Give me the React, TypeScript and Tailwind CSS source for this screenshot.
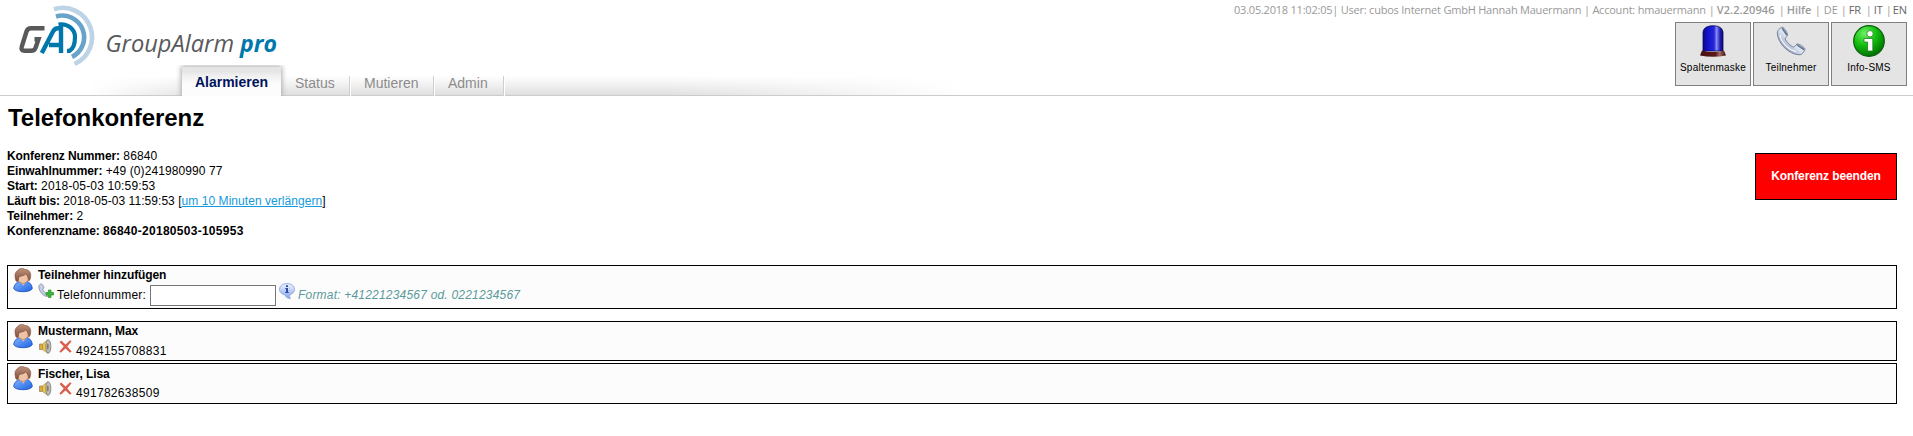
import React from "react";

function Logo() {
  return (
    <svg width="270" height="70" viewBox="12 0 270 70" className="block shrink-0" fill="none">
      <path d="M54 9.200A29.300 29.300 0 0 1 74.500 64" stroke="#bdd3e6" strokeWidth="4.600" />
      <path d="M56 16.500A21.800 21.800 0 0 1 72 56.900" stroke="#68a3c9" strokeWidth="4.600" />
      <path d="M58.500 24.500C68 23 75 29.500 75 37C75 44 73 49 69.500 50.800H67" stroke="#0078ab" strokeWidth="4.200" />
      <path d="M44.500 28.200H31C28.500 28.200 27.200 29.200 26.500 31.500L21.800 46.500C21 49.500 22 50.800 24.500 50.800H31C33.500 50.800 34.800 50 35.500 48L38.500 39.200H34.500" stroke="#58595b" strokeWidth="4.400" />
      <path d="M41.800 53L53 31.500C54.500 28.800 55.500 28.300 58 28.300H61V53M49 45H61" stroke="#0078ab" strokeWidth="4.400" />
      <text x="105.500" y="52" textLength="128.500" lengthAdjust="spacingAndGlyphs" fill="#58595b" className="font-['Open_Sans',sans-serif] text-[24px] italic">GroupAlarm</text>
      <text x="240" y="52" textLength="37" lengthAdjust="spacingAndGlyphs" fill="#0078ab" className="font-['Open_Sans',sans-serif] text-[24px] font-bold italic">pro</text>
    </svg>
  );
}

function BeaconIcon() {
  return (
    <svg width="28" height="32" viewBox="0 0 28 32" className="block">
      <defs>
        <linearGradient id="beacon" x1="0" x2="1">
          <stop offset="0" stopColor="#0b0b86" />
          <stop offset="0.250" stopColor="#1414cc" />
          <stop offset="0.550" stopColor="#2424d8" />
          <stop offset="0.680" stopColor="#8c8cf5" />
          <stop offset="0.850" stopColor="#2020b8" />
          <stop offset="1" stopColor="#080870" />
        </linearGradient>
        <linearGradient id="beaconBase" x1="0" x2="1">
          <stop offset="0" stopColor="#451010" />
          <stop offset="0.600" stopColor="#5c1a18" />
          <stop offset="0.750" stopColor="#a06c66" />
          <stop offset="1" stopColor="#3a0c0c" />
        </linearGradient>
      </defs>
      <path d="M4 26V8C4 3 8 0.800 14 0.800S24 3 24 8V26Z" fill="url(#beacon)" stroke="#08085c" strokeWidth="0.800" />
      <path d="M3 25.500Q14 28.500 25 25.500L27 30.500Q14 33 1 30.500Z" fill="url(#beaconBase)" />
    </svg>
  );
}

function HandsetIcon() {
  return (
    <svg width="30" height="30" viewBox="0 0 30 30" className="block">
      <defs>
        <linearGradient id="handset" x1="0" y1="1" x2="1" y2="0">
          <stop offset="0.200" stopColor="#8b99b5" />
          <stop offset="0.500" stopColor="#dfe6f2" />
          <stop offset="0.850" stopColor="#9eacc6" />
        </linearGradient>
      </defs>
      <path d="M1.300 7C1 5 4 1.500 6.500 1.300C8 1.300 12 7.500 11.500 9.500C11.200 11 9 11.500 9.200 12.800C10 15.500 15 20.500 17.500 21C19 21 19.500 18.500 21 18C23 17.500 29 21.500 29 23.300C28.500 25.500 26 28.500 24 28.800C13 29 1.500 17 1.300 7Z" fill="url(#handset)" stroke="#74839f" strokeWidth="1" />
      <path d="M6.300 2.200L11 9.200M21 18.800L28 23.500" stroke="#65748f" strokeWidth="1.600" />
      <path d="M4 9C5 16 12 23.500 20 25.500" fill="none" stroke="#f4f7fd" strokeWidth="1.300" />
    </svg>
  );
}

function InfoIcon() {
  return (
    <svg width="32" height="32" viewBox="0 0 32 32" className="block">
      <defs>
        <radialGradient id="green" cx="0.350" cy="0.250" r="0.800">
          <stop offset="0" stopColor="#6cf064" />
          <stop offset="0.500" stopColor="#11bd0d" />
          <stop offset="1" stopColor="#006b00" />
        </radialGradient>
      </defs>
      <circle cx="16" cy="16" r="15.300" fill="url(#green)" stroke="#075f07" strokeWidth="1.200" />
      <g fill="#ffffff" stroke="#0a7a0a" strokeWidth="0.700">
        <circle cx="17" cy="8.800" r="3.200" />
        <path d="M11 13.500H19.800V26H14.500V17H11Z" />
      </g>
    </svg>
  );
}

function PersonIcon() {
  return (
    <svg width="20" height="25" viewBox="0 0 20 25" className="block shrink-0">
      <defs>
        <linearGradient id="body" x1="0" y1="0" x2="1" y2="1">
          <stop offset="0" stopColor="#7fb4ff" />
          <stop offset="1" stopColor="#1f62e0" />
        </linearGradient>
        <linearGradient id="hair" x1="0" y1="0" x2="0" y2="1">
          <stop offset="0" stopColor="#c0927a" />
          <stop offset="1" stopColor="#80503a" />
        </linearGradient>
      </defs>
      <path d="M0.700 20.500C1 16.500 4 14 6.500 13.500L10 17L13.500 13.500C16.500 14 19 16.500 19.300 20.500C18 23 14 23.700 10 23.700S2 23 0.700 20.500Z" fill="url(#body)" stroke="#2358c4" strokeWidth="0.900" />
      <path d="M6.500 13.500H13.500L10.200 17.500Z" fill="#f3cdb4" />
      <ellipse cx="10" cy="9.500" rx="5.300" ry="6" fill="#eec2a5" stroke="#a86e50" strokeWidth="0.600" />
      <path d="M3 13C1.500 8 1.500 4.500 4.500 2.700C6.500 0 10.500 0.300 12 1.500C16 1.200 18.500 5 17.500 9C17.300 11 16.700 12.500 15.800 13C15.500 10 15 8 12.500 6C11 8 7.500 8 6 8.700C5.500 10.500 5.500 12 4.500 13.500Z" fill="url(#hair)" stroke="#7a4935" strokeWidth="0.600" />
    </svg>
  );
}

function AddCallIcon() {
  return (
    <svg width="16" height="15" viewBox="0 0 16 15" className="block shrink-0">
      <path d="M0.800 3.500C0.800 2.300 2.300 0.800 3.500 0.900C4.500 1.300 6 3.600 5.900 4.700C5.800 5.500 4.700 5.800 4.800 6.500C5.300 8 7.500 10.300 8.800 10.500L9.500 13.500C5.500 13.500 0.800 8.500 0.800 3.500Z" fill="#c5cfdf" stroke="#7b8aa6" strokeWidth="0.800" />
      <path d="M10.500 7H13V9.500H15.500V12H13V14.500H10.500V12H8V9.500H10.500Z" fill="#3fb53a" stroke="#1f9423" strokeWidth="0.700" />
    </svg>
  );
}

function HintIcon() {
  return (
    <svg width="16" height="16" viewBox="0 0 16 16" className="block shrink-0">
      <defs>
        <linearGradient id="hint" x1="0" y1="0" x2="0" y2="1">
          <stop offset="0" stopColor="#edf3ff" />
          <stop offset="1" stopColor="#86a6ea" />
        </linearGradient>
      </defs>
      <path d="M8 0.600C12.500 0.600 15.500 3 15.500 6.300C15.500 9 13.500 11 10.500 11.700L11 12.500L10 13L11.500 15.500C8.500 15.500 6.500 14 5.800 11.800C2.500 11.200 0.500 9 0.500 6.300C0.500 3 3.500 0.600 8 0.600Z" fill="url(#hint)" stroke="#8fa6de" strokeWidth="0.900" />
      <path d="M7 2.300H9V4H7ZM6.300 5H9V9H9.800V10H6.200V9H7V6H6.300Z" fill="#2f4da8" />
    </svg>
  );
}

function SpeakerIcon() {
  return (
    <svg width="13" height="15" viewBox="0 0 13 15" className="block shrink-0">
      <path d="M0.500 5H3.500V10.500H0.500Z" fill="#d9ac3a" stroke="#94815a" strokeWidth="0.700" />
      <path d="M3.500 5L8.700 0.700C10 3 10 11.500 8.700 14.300L3.500 10.500Z" fill="#efc54b" stroke="#a38c50" strokeWidth="0.700" />
      <ellipse cx="9.300" cy="7.500" rx="2.500" ry="6.700" fill="#bcbcbc" stroke="#858585" strokeWidth="0.900" />
      <ellipse cx="8.800" cy="7.500" rx="0.900" ry="3" fill="#8c7a4a" />
    </svg>
  );
}

function RemoveIcon() {
  return (
    <svg width="13" height="13" viewBox="0 0 13 13" className="block shrink-0">
      <path d="M0.500 2L2.300 0.500L6.500 4.500L11 0.300L12.600 1.300L8.300 6.500L12.600 11.500L11 12.700L6.500 8.600L1.800 12.700L0.400 11.500L4.700 6.500Z" fill="#d9604f" />
    </svg>
  );
}

function ToolButton({ label, children }: { label: string; children: React.ReactNode }) {
  return (
    <button className="flex h-16 w-[76px] flex-col items-center border border-[#808080] bg-[#e4e4e4] pt-[2px]">
      <span className="flex h-8 items-center">{children}</span>
      <span className="mt-[5px] text-[10px] leading-3 tracking-[0.22px] whitespace-nowrap text-black">{label}</span>
    </button>
  );
}

function Tab({ label, width }: { label: string; width: string }) {
  return (
    <a className={`flex h-5 items-center border-r border-[#cfcfcf] pl-[14px] shadow-[1px_0_0_#ffffff] ${width}`}>
      <span className="-mt-[7px]">{label}</span>
    </a>
  );
}

function Info({ label, tracking = "tracking-[0.15px]", children }: { label: string; tracking?: string; children: React.ReactNode }) {
  return (
    <div>
      <b className="tracking-[-0.1px]">{label}</b> <span className={tracking}>{children}</span>
    </div>
  );
}

function Participant({ name, phone, row }: { name: string; phone: string; row: "first" | "next" }) {
  return (
    <li className={`flex gap-[5px] border border-black bg-[#fcfcfc] pt-[2px] pl-[5px] ${row === "first" ? "h-10" : "h-[41px]"}`}>
      <PersonIcon />
      <div>
        <b className={`block h-[15px] tracking-[-0.08px] ${row === "first" ? "leading-[14px]" : "leading-4"}`}>{name}</b>
        <div className="flex pl-[1px]">
          <SpeakerIcon />
          <span className="ml-[7px] pt-[1px]"><RemoveIcon /></span>
          <span className="ml-[4px] pt-[5px] leading-[14px] tracking-[0.3px]">{phone}</span>
        </div>
      </div>
    </li>
  );
}

export default function App() {
  return (
    <div className="h-[436px] overflow-hidden bg-white font-['Liberation_Sans',Arial,sans-serif] text-xs text-black">
      <header className="relative flex h-24 justify-between border-b border-[#cccccc] pr-[6px] pl-3">
        <div className="absolute top-[76px] left-[88px] h-[19px] w-[880px] bg-linear-to-b from-white to-[#dfdfdf] mask-[linear-gradient(to_right,transparent,#000_14%,#000_65%,transparent)]" />
        <div className="relative flex flex-col">
          <div className="h-[67px]"><Logo /></div>
          <nav className="ml-[170px] flex h-[29px] items-end text-sm text-[#8c8c8c]">
            <a className="relative flex h-[29px] w-[99px] justify-center bg-linear-to-b from-[#e5e5e5] from-15% via-[#f0f0f0] via-30% to-[#fcfcfc] to-60% pt-[7px] leading-4 font-bold text-[#00125c] shadow-[0_0_5px_1px_#aaaaaa] [clip-path:inset(-2px_-7px_0_-7px)]">
              Alarmieren
            </a>
            <Tab label="Status" width="w-[69px]" />
            <Tab label="Mutieren" width="w-[84px]" />
            <Tab label="Admin" width="w-[70px]" />
          </nav>
        </div>
        <div className="relative flex w-[673px] flex-col items-end">
          <div className="flex h-[22px] w-full pt-[2px] font-['Open_Sans',sans-serif] text-[11px] leading-4 whitespace-nowrap text-[#999999]">
            <span className="w-[475px] tracking-[-0.22px]">03.05.2018 11:02:05| User: cubos Internet GmbH Hannah Mauermann | Account: hmauermann</span>
            <span className="w-[8px]">|</span>
            <b className="w-[62px] font-semibold tracking-[0.1px]">V2.2.20946</b>
            <span className="w-[8px]">|</span>
            <b className="w-[28px] font-semibold">Hilfe</b>
            <span className="w-[9px]">|</span>
            <span className="w-[17px]">DE</span>
            <span className="w-[8px]">|</span>
            <span className="w-[17px] text-[#666666]">FR</span>
            <span className="w-[8px]">|</span>
            <span className="w-[12px] text-[#666666]">IT</span>
            <span className="w-[7px]">|</span>
            <span className="text-[#666666]">EN</span>
          </div>
          <div className="flex gap-[2px]">
            <ToolButton label="Spaltenmaske"><BeaconIcon /></ToolButton>
            <ToolButton label="Teilnehmer"><HandsetIcon /></ToolButton>
            <ToolButton label="Info-SMS"><InfoIcon /></ToolButton>
          </div>
        </div>
      </header>

      <main className="pr-4 pl-[7px]">
        <h1 className="h-[53px] pt-2 pl-px text-2xl leading-7 font-bold tracking-[-0.05px]">Telefonkonferenz</h1>
        <section className="flex h-[116px] items-start justify-between leading-[15px]">
          <div>
            <Info label="Konferenz Nummer:">86840</Info>
            <Info label="Einwahlnummer:" tracking="tracking-[0.1px]">+49 (0)241980990 77</Info>
            <Info label="Start:">2018-05-03 10:59:53</Info>
            <Info label="Läuft bis:" tracking="tracking-[0.05px]">
              2018-05-03 11:59:53 [<a className="text-[#1499dd] underline">um 10 Minuten verlängern</a>]
            </Info>
            <Info label="Teilnehmer:">2</Info>
            <Info label="Konferenzname:" tracking="tracking-[0.28px]"><b>86840-20180503-105953</b></Info>
          </div>
          <button className="mt-1 h-[47px] w-[142px] border border-black bg-[#ff0000] font-bold tracking-[-0.1px] text-white">Konferenz beenden</button>
        </section>

        <section className="flex h-11 gap-[5px] border border-black bg-[#fcfcfc] pt-[2px] pl-[5px]">
          <PersonIcon />
          <div>
            <b className="block h-[15px] leading-[15px] tracking-[-0.1px]">Teilnehmer hinzufügen</b>
            <div className="flex">
              <AddCallIcon />
              <label className="ml-[3px] w-[93px] pt-[5px] leading-[14px] tracking-[0.22px] whitespace-nowrap">Telefonnummer:</label>
              <input className="mt-[2px] h-[21px] w-[126px] border border-[#767676] bg-white" />
              <span className="ml-[3px]"><HintIcon /></span>
              <i className="ml-[3px] pt-[5px] leading-[14px] tracking-[0.2px] text-[#5a9a9a]">Format: +41221234567 od. 0221234567</i>
            </div>
          </div>
        </section>

        <ul className="mt-3 flex flex-col gap-[2px]">
          <Participant name="Mustermann, Max" phone="4924155708831" row="first" />
          <Participant name="Fischer, Lisa" phone="491782638509" row="next" />
        </ul>
      </main>
    </div>
  );
}
